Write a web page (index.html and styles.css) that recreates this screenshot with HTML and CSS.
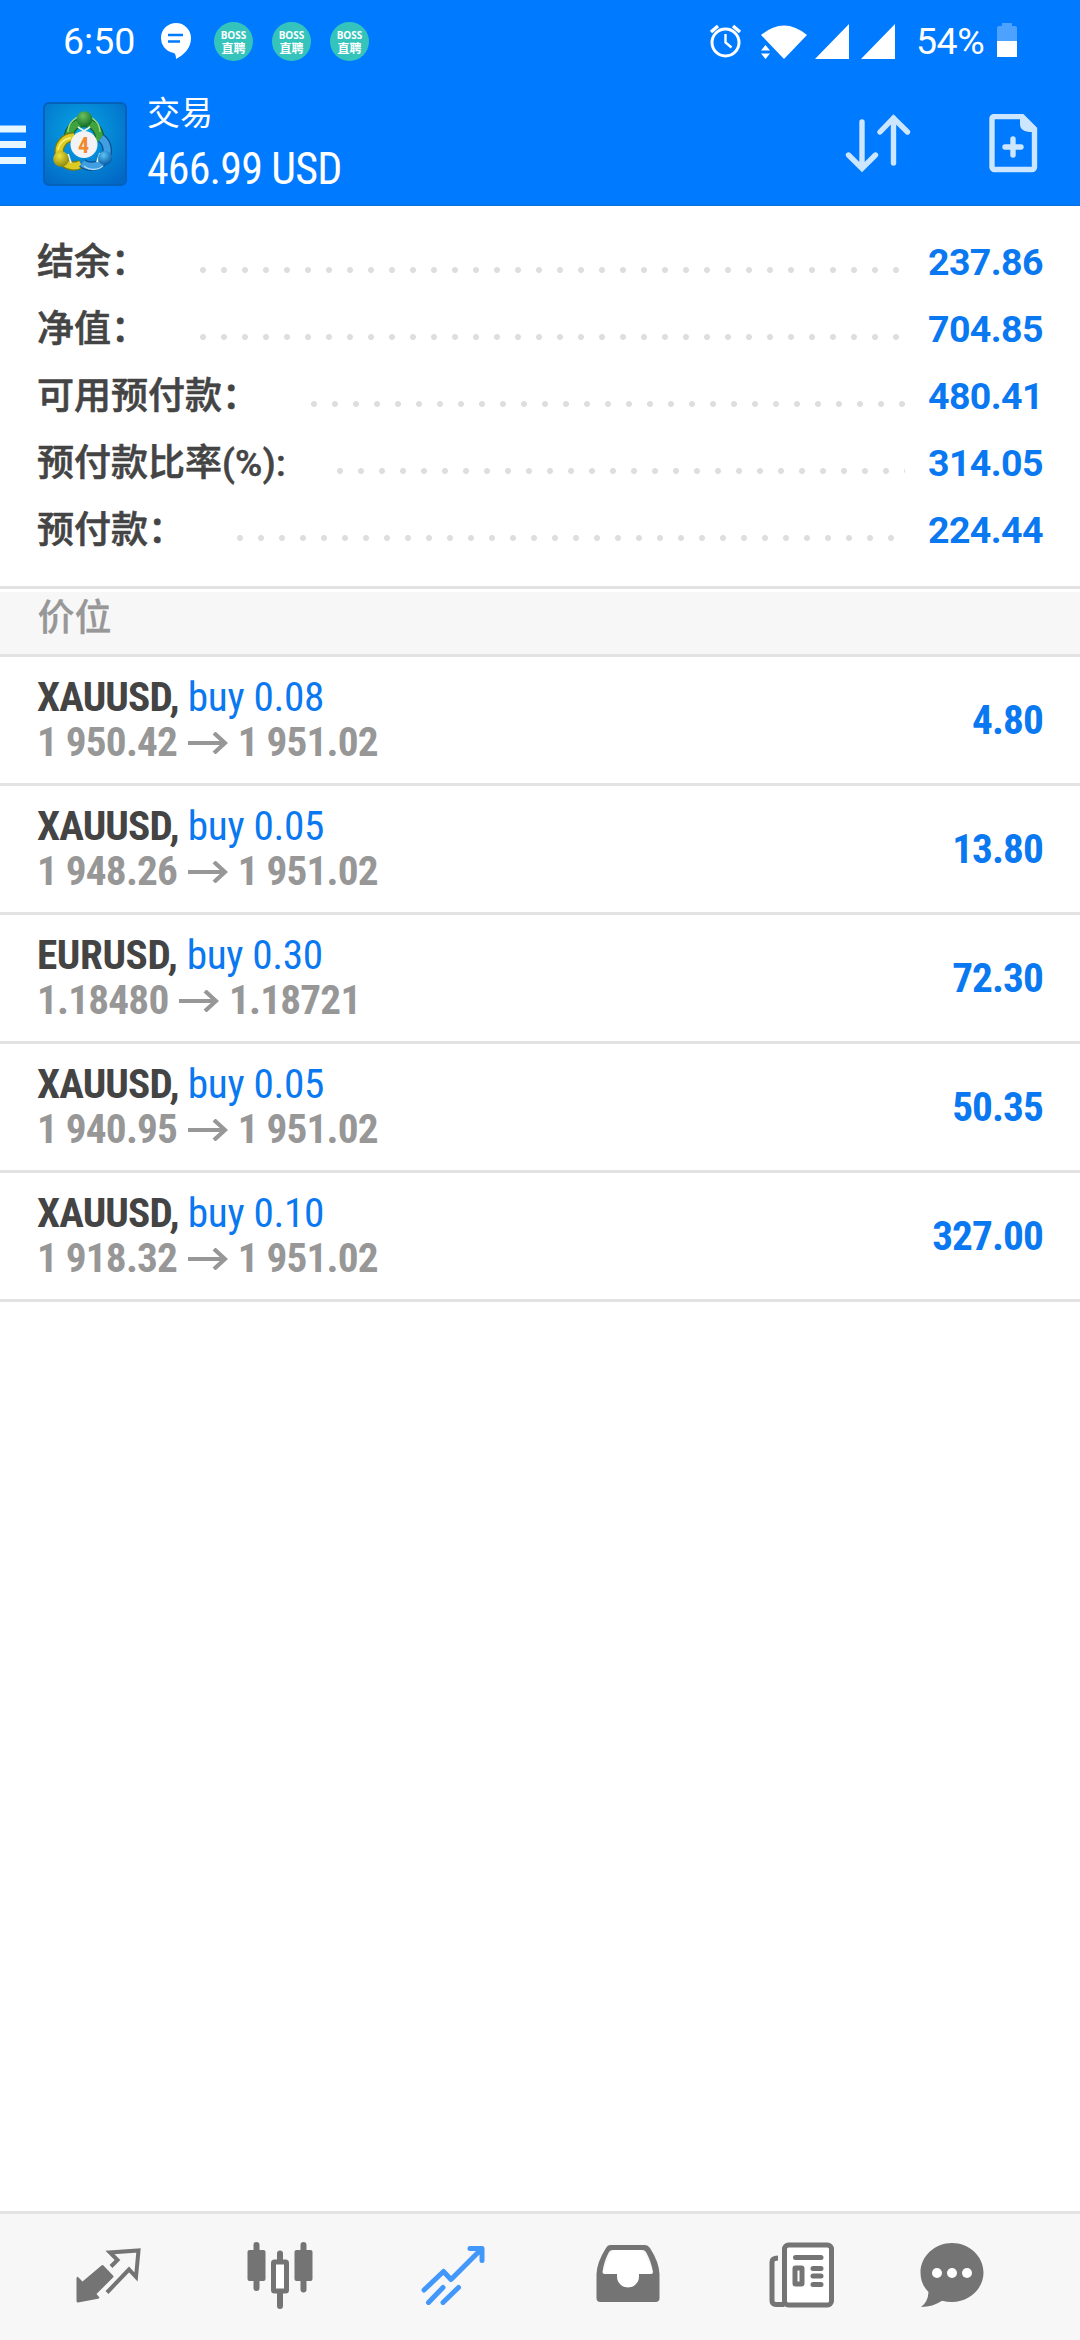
FILE: index.html
```html
<!DOCTYPE html>
<html lang="zh-CN">
<head>
<meta charset="utf-8">
<title>交易</title>
<link rel="stylesheet" href="styles.css">
</head>
<body>
<header class="top">
  <div class="status">
    <span class="clock">6:50</span>
    <svg class="st-chat" width="32" height="38" viewBox="0 0 32 38"><path d="M16 1a15 15 0 0 0-3 29.700Q16 31 16 37Q31 29 31 16A15 15 0 0 0 16 1z" fill="#fff"/><path d="M8 13H23M8 19.500H20" stroke="#007aff" stroke-width="2.600"/></svg>
    <span class="boss"><b>BOSS</b><i>直聘</i></span>
    <span class="boss"><b>BOSS</b><i>直聘</i></span>
    <span class="boss"><b>BOSS</b><i>直聘</i></span>
    <svg class="st-icons" width="196" height="40" viewBox="0 0 196 40" fill="#fff">
      <circle cx="16.500" cy="21.500" r="13.500" fill="none" stroke="#fff" stroke-width="3"/>
      <path d="M16.500 13v8.500l6 5" fill="none" stroke="#fff" stroke-width="2.400"/>
      <path d="M2 11l7-6M31 11l-7-6" stroke="#fff" stroke-width="3.500"/>
      <path d="M52 14Q75 -5 98 14L75 38z"/>
      <path d="M52 29.500l4.500-5.500 4.500 5.500zM52 32.500l4.500 5.500 4.500-5.500z"/>
      <path d="M106 38L140 3V38zM152 38L186 3V38z"/>
    </svg>
    <span class="pct">54%</span>
    <svg class="st-batt" width="20" height="36" viewBox="0 0 20 36"><path d="M0 5a2 2 0 0 1 2-2H5V0H15V3H18a2 2 0 0 1 2 2V19H0z" fill="#4da2ff"/><path d="M0 18H20V34H0z" fill="#fff"/></svg>
  </div>
  <div class="bar">
    <svg class="menu" width="26" height="40" viewBox="0 0 26 40"><path d="M0 4H26M0 19.500H26M0 35.500H26" stroke="#e6f6ff" stroke-width="7"/></svg>
    <svg class="logo" width="84" height="84" viewBox="0 0 84 84">
      <defs>
        <radialGradient id="bg" cx=".45" cy=".35" r=".75"><stop offset="0" stop-color="#06a6e4"/><stop offset="1" stop-color="#0268c6"/></radialGradient>
        <radialGradient id="g" cx=".4" cy=".3" r=".7"><stop offset="0" stop-color="#6cc35a"/><stop offset="1" stop-color="#14702c"/></radialGradient>
        <radialGradient id="y" cx=".4" cy=".3" r=".7"><stop offset="0" stop-color="#f2e23c"/><stop offset="1" stop-color="#8c8a10"/></radialGradient>
        <radialGradient id="b" cx=".4" cy=".3" r=".7"><stop offset="0" stop-color="#5cc4f4"/><stop offset="1" stop-color="#0a5ca8"/></radialGradient>
      </defs>
      <rect x="1" y="1" width="82" height="82" rx="5" fill="url(#bg)" stroke="#0560b8" stroke-width="2"/>
      <g fill="none">
        <path d="M26 40A15.500 15.500 0 1 1 56 40" stroke="#14602c" stroke-width="9.500"/>
        <path d="M26 40A15.500 15.500 0 1 1 56 40" stroke="#3fa43e" stroke-width="7"/>
        <path d="M25 30A15.500 15.500 0 0 1 57 30" stroke="#9ad67c" stroke-width="1.500"/>
        <path d="M31 35A14.500 14.500 0 1 0 38 62" stroke="#7c7a10" stroke-width="9.500"/>
        <path d="M31 35A14.500 14.500 0 1 0 38 62" stroke="#dccb22" stroke-width="7"/>
        <path d="M28 36A14 14 0 0 0 15 48" stroke="#fbf27c" stroke-width="1.500"/>
        <path d="M58 36A15 15 0 1 1 39 61" stroke="#0b4f96" stroke-width="9.500"/>
        <path d="M58 36A15 15 0 1 1 39 61" stroke="#3f9fe0" stroke-width="7"/>
        <path d="M41 64A15 15 0 0 0 60 64" stroke="#a8dcfa" stroke-width="1.500"/>
        <path d="M35 25L41 29L47 25M25 52L28 61M57 51L54 60" stroke="#eef4e4" stroke-width="1.800"/>
      </g>
      <circle cx="41.500" cy="17" r="7.800" fill="url(#g)"/>
      <circle cx="18" cy="57" r="7.800" fill="url(#y)"/>
      <circle cx="62" cy="56" r="7" fill="url(#b)"/>
      <circle cx="41" cy="42.500" r="13.500" fill="#f3f3f6"/>
      <text x="40.500" y="50.500" text-anchor="middle" class="four">4</text>
    </svg>
    <div class="title"><span class="t1">交易</span><span class="t2">466.99 USD</span></div>
    <svg class="act" width="230" height="60" viewBox="0 0 230 60" fill="none" stroke="#cce6ff" stroke-width="5.400" stroke-linecap="round">
      <path d="M20 8V54M6.500 41L20 54.500L33.500 41M51.500 49V4M38 18L51.500 4L65.500 18"/>
      <path d="M152 2.500H180L192.500 15V53a2.500 2.500 0 0 1-2.500 2.500H152.500a2.500 2.500 0 0 1-2.500-2.500V5a2.500 2.500 0 0 1 2-2.500zM171 25V41M163 33H179" stroke-linejoin="round"/>
      <path d="M179 5V10Q179 17 190 17z" fill="#cce6ff" stroke-width="2"/>
    </svg>
  </div>
</header>
<section class="summary">
  <div class="sum"><span class="k">结余：</span><span class="dots"></span><span class="v">237.86</span></div>
  <div class="sum"><span class="k">净值：</span><span class="dots"></span><span class="v">704.85</span></div>
  <div class="sum"><span class="k">可用预付款：</span><span class="dots"></span><span class="v">480.41</span></div>
  <div class="sum"><span class="k">预付款比率<span class="lat">(%):</span></span><span class="dots"></span><span class="v">314.05</span></div>
  <div class="sum"><span class="k">预付款：</span><span class="dots"></span><span class="v">224.44</span></div>
</section>
<h2 class="section">价位</h2>
<main class="list">
  <div class="row"><div class="info"><p class="sym"><b>XAUUSD,</b> buy 0.08</p><p class="px">1 950.42<svg class="arr" viewBox="0 0 40 22"><path d="M0 11H37M26 1L37 11L26 21"/></svg>1 951.02</p></div><span class="pl">4.80</span></div>
  <div class="row"><div class="info"><p class="sym"><b>XAUUSD,</b> buy 0.05</p><p class="px">1 948.26<svg class="arr" viewBox="0 0 40 22"><path d="M0 11H37M26 1L37 11L26 21"/></svg>1 951.02</p></div><span class="pl">13.80</span></div>
  <div class="row"><div class="info"><p class="sym"><b class="eur">EURUSD,</b> buy 0.30</p><p class="px">1.18480<svg class="arr" viewBox="0 0 40 22"><path d="M0 11H37M26 1L37 11L26 21"/></svg>1.18721</p></div><span class="pl">72.30</span></div>
  <div class="row"><div class="info"><p class="sym"><b>XAUUSD,</b> buy 0.05</p><p class="px">1 940.95<svg class="arr" viewBox="0 0 40 22"><path d="M0 11H37M26 1L37 11L26 21"/></svg>1 951.02</p></div><span class="pl">50.35</span></div>
  <div class="row"><div class="info"><p class="sym"><b>XAUUSD,</b> buy 0.10</p><p class="px">1 918.32<svg class="arr" viewBox="0 0 40 22"><path d="M0 11H37M26 1L37 11L26 21"/></svg>1 951.02</p></div><span class="pl">327.00</span></div>
</main>
<nav class="tabs">
  <svg class="tab quotes" width="66" height="60" viewBox="0 0 66 60">
    <path d="M26.500 18.500q1-1 2 0L38 28.500q1 1 0 2L21.500 47l3 3.500q0 1-1.500 1.200L3 55.500q-1.500 0-1.500-1.500V31q1-2 2-.5l4 4z" fill="#747474"/>
    <path d="M36 19.500l6.500-6.500-7.500-7.500L63.500 3.500 61 30l-7-7.500L32 45.500" fill="none" stroke="#747474" stroke-width="4"/>
  </svg>
  <svg class="tab charts" width="68" height="68" viewBox="0 0 68 68">
    <path d="M10.500 3V46M34 11.500V64M57.500 3V47.500" stroke="#747474" stroke-width="6" stroke-linecap="round"/>
    <rect x="1.500" y="8" width="18" height="31" rx="2" fill="#747474"/><rect x="48.500" y="8" width="18" height="31" rx="2" fill="#747474"/>
    <rect x="27.500" y="20" width="13" height="29" rx="1" fill="#fff" stroke="#747474" stroke-width="5"/>
  </svg>
  <svg class="tab trade" width="64" height="60" viewBox="0 0 64 60" fill="none" stroke="#4298fa" stroke-width="5">
    <path d="M3 45L22.500 26.500L30 34.500L60 4.500M49 3.500H61V15.500M7.500 57.500L22 42.500M22 57.500L37.500 42.500" stroke-linecap="round" stroke-linejoin="round"/>
  </svg>
  <svg class="tab history" width="64" height="60" viewBox="0 0 64 60"><path d="M16 5H47L58 30H6z" fill="#fff"/><path d="M20 28H44V45H20z" fill="#fff"/><path fill-rule="evenodd" d="M14 1H49q3 0 5 3Q63 18 63.500 30V54q0 4-4 4H4.500q-4 0-4-4V30Q1 18 10 4q1.500-3 4-3zM17 6q-3 0-4 2Q8 17 6.500 28q0 2 2 2H21v2.500a10.800 10.800 0 0 0 22 0V30H55q2 0 2-2Q55 17 50 8q-1-2-4-2z" fill="#747474"/></svg>
  <svg class="tab news" width="66" height="66" viewBox="0 0 66 66" fill="none" stroke="#747474" stroke-width="5">
    <path d="M15.500 62.500H7q-4 0-4-4V20q0-4 6-4" /><rect x="15.500" y="3" width="47" height="60" rx="4" fill="#fff"/>
    <path d="M26.500 15.500H52M44 26.500H52M44 34H52M44 42.500H52" stroke-linecap="round"/><rect x="26" y="26" width="7" height="16" stroke-width="5" rx=".5"/>
  </svg>
  <svg class="tab chat" width="64" height="66" viewBox="0 0 64 66"><path d="M32 1C49 1 63.500 14 63.500 30.500S49 60 32 60q-5 0-10-1.200Q13 65 1 65q7-5 7.500-15Q.5 42 .5 30.500C.5 14 15 1 32 1z" fill="#747474"/><circle cx="17" cy="31" r="5" fill="#fff"/><circle cx="32" cy="31" r="5" fill="#fff"/><circle cx="47" cy="31" r="5" fill="#fff"/></svg>
</nav>
</body>
</html>
```
FILE: styles.css
```css
* { box-sizing: border-box; }
body { margin: 0; width: 1080px; height: 2340px; display: flex; flex-direction: column; background: #fff; font-family: Roboto, "Noto Sans CJK SC", sans-serif; color: #444; white-space: nowrap; }
p, h2 { margin: 0; font-weight: 400; }
svg { display: block; flex: none; }

.top { height: 206px; background: #007aff; color: #fff; border-bottom: 1px solid #0c6fd6; }
.status { height: 82px; display: flex; align-items: center; padding-left: 63px; }
.clock { width: 97px; font-size: 37.5px; }
.st-chat { margin-right: 22px; }
.boss { width: 39px; height: 39px; border-radius: 50%; background: #35c4bb; margin-right: 19px; display: flex; flex-direction: column; align-items: center; padding-top: 7px; }
.boss b { font: 700 10px/12px "Open Sans", sans-serif; }
.boss i { font: 700 12px/13px "Noto Sans CJK SC", sans-serif; }
.st-icons { margin-left: 321px; }
.pct { font-size: 37.5px; width: 81px; margin-left: 11px; letter-spacing: -.5px; }
.bar { height: 123px; display: flex; align-items: flex-start; }
.menu { margin-top: 43px; }
.logo { margin: 20px 0 0 17px; }
.four { font: 700 22px Roboto, sans-serif; font-stretch: 85%; fill: #f08a2a; }
.title { display: flex; flex-direction: column; margin-left: 20px; width: 200px; }
.t1 { font-size: 33px; line-height: 40px; margin-top: 12px; }
.t2 { font-size: 44px; line-height: 52px; font-family: "Roboto Condensed", Roboto, sans-serif; font-stretch: 75%; letter-spacing: -.85px; margin-top: 9px; }
.act { margin: 32px 0 0 495px; }

.summary { height: 380px; padding: 22px 37px 0; }
.sum { height: 67px; display: flex; align-items: center; font-size: 37px; font-weight: 500; }
.k { padding-bottom: 6px; -webkit-text-stroke: .6px #444; }
.lat { -webkit-text-stroke: .5px #444; letter-spacing: .3px; }
.dots { flex: 1; height: 6px; margin: 16px 23.3px 0 51.5px; background: radial-gradient(circle at 3px 3px, #dedede 2.600px, transparent 3.400px) 0 0 / 21px 6px repeat-x; }
.v { color: #0a78f0; font-weight: 700; font-size: 37.5px; letter-spacing: -.6px; width: 115px; }

.section { height: 71px; border-top: 3px solid #e3e3e3; border-bottom: 3px solid #e3e3e3; background: linear-gradient(#fff 3px, #f7f7f7 3px); padding-left: 37.500px; font-size: 37px; line-height: 60px; font-weight: 500; color: #979797; -webkit-text-stroke: .3px #979797; }
.row { height: 129px; border-bottom: 3px solid #e3e3e3; padding: 0 37px; display: flex; align-items: center; justify-content: space-between; font-size: 41.25px; font-family: "Roboto Condensed", Roboto, sans-serif; font-stretch: 75%; }
.sym, .px { line-height: 45px; }
.sym { color: #0a78f0; letter-spacing: -.35px; }
.sym b { color: #444; font-weight: 700; letter-spacing: -.85px; }
.sym .eur { letter-spacing: -.4px; }
.px { color: #979797; font-weight: 700; display: flex; align-items: center; letter-spacing: -.8px; }
.arr { width: 40px; height: 22px; margin: 0 9.5px 0 11px; fill: none; stroke: #979797; stroke-width: 4.200; }
.pl { color: #0a78f0; font-weight: 700; letter-spacing: -.9px; }

.tabs { margin-top: auto; height: 129px; border-top: 3px solid #e3e3e3; background: #f7f7f7; display: flex; align-items: flex-start; padding-left: 75px; }
.quotes { margin-top: 33px; }
.charts { margin: 28px 0 0 105px; }
.trade { margin: 31px 0 0 107px; }
.history { margin: 30px 0 0 111px; }
.news { margin: 28px 0 0 109px; }
.chat { margin: 28px 0 0 85px; }
```
